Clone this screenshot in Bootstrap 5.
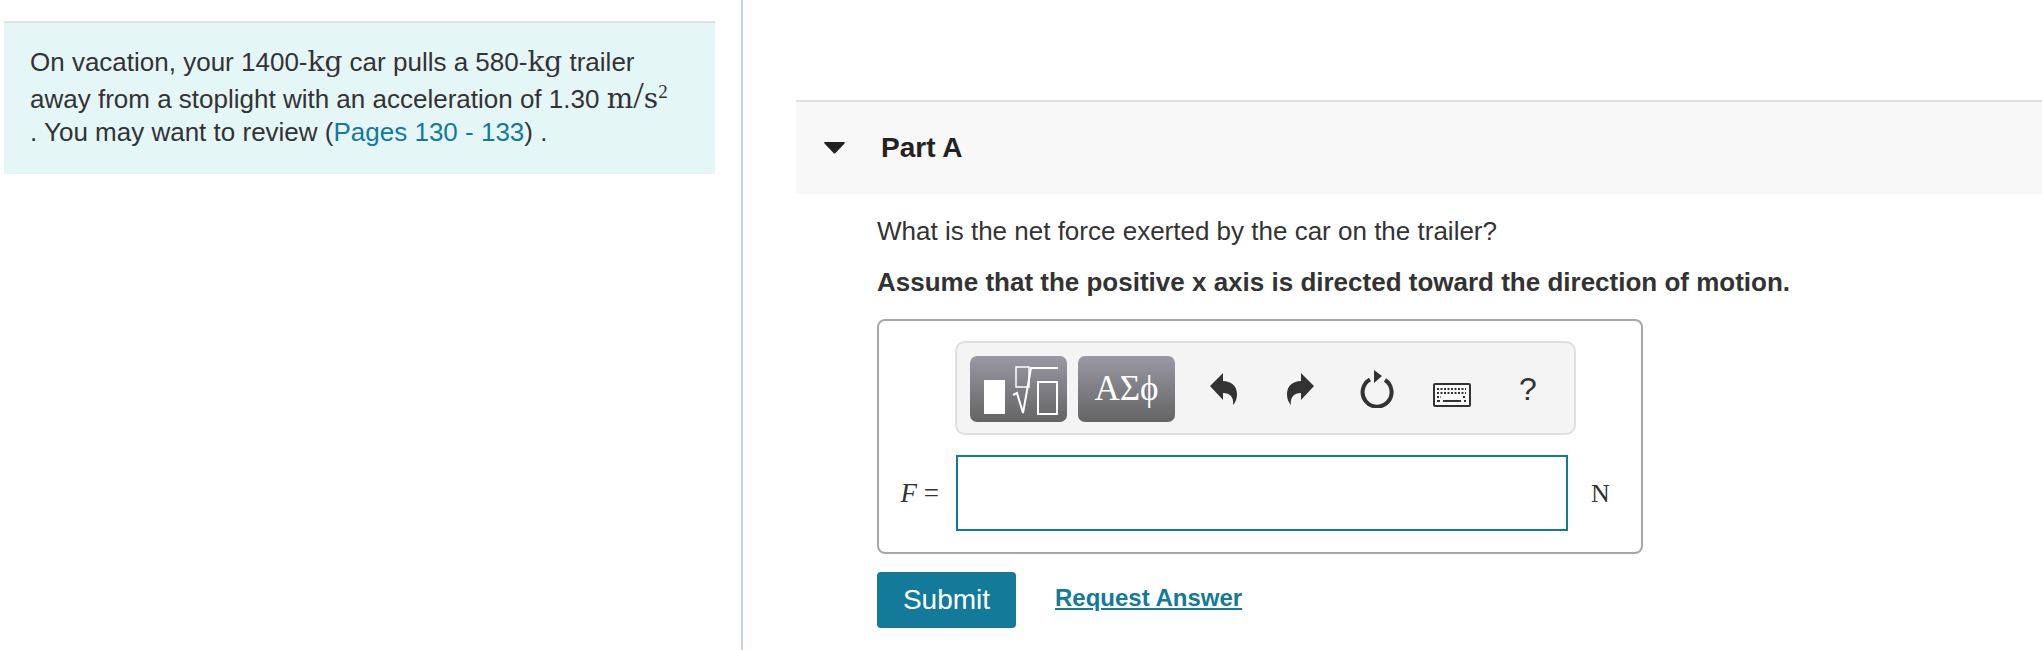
<!DOCTYPE html>
<html lang="en">
<head>
  <meta charset="UTF-8" />
  <title>Part A</title>
  <link href="https://cdn.jsdelivr.net/npm/bootstrap@5.3.0/dist/css/bootstrap.min.css" rel="stylesheet">
  <style>
    html, body { height: 650px; overflow: hidden; }
    body {
      background: #fff;
      color: #333;
      font-family: "Liberation Sans", Arial, sans-serif;
      font-size: 26px;
      line-height: 33px;
    }
    .left-pane {
      width: 743px;
      height: 650px;
      padding: 21px 26px 0 4px;
      border-right: 2px solid #c3d3e3;
      flex-shrink: 0;
    }
    .intro-box {
      background: #e5f6f7;
      border-top: 2px solid #dfe2e4;
      padding: 23px 26px 0;
      height: 153px;
    }
    .intro-box a, .link-answer { color: #137a9a; }
    .intro-box a { text-decoration: none; }
    .tex { font-family: "DejaVu Serif", "Liberation Serif", serif; font-size: 28px; line-height: 30px; }
    .tex-slash { font-family: "Liberation Serif", serif; font-size: 38px; font-weight: 400; line-height: 28px; }
    .tex sup { font-family: "Liberation Serif", serif; font-size: 19px; top: -.55em; line-height: 0; }
    .second-line { display: block; margin-top: 2px; }
    .right-pane { padding: 100px 0 0 53px; }
    .part-head {
      height: 94px;
      background: #f8f8f8;
      border-top: 2px solid #dfdfdf;
      padding-left: 28px;
      gap: 36px;
    }
    .part-head h2 { font-size: 28px; font-weight: 700; margin: 0; color: #222; line-height: 34px; }
    .part-body { padding: 20px 0 0 81px; }
    .part-body p { margin: 0 0 17px; color: #333; line-height: 34px; }
    .answer-box {
      width: 766px;
      height: 235px;
      border: 2px solid #a8a8a8;
      border-radius: 8px;
      padding: 20px 0 0 0;
      margin-top: 20px;
    }
    .tool-bar {
      width: 621px;
      height: 94px;
      margin-left: 76px;
      background: #f4f4f4;
      border: 2px solid #dfdfdf;
      border-radius: 10px;
      padding: 13px 0 0 13px;
    }
    .tmpl-btn {
      width: 97px;
      height: 66px;
      margin-right: 11px;
      padding: 0;
      border: 0;
      border-radius: 7px;
      background: linear-gradient(#9a98a3, #646464);
      color: #fff;
      font-family: "Liberation Serif", serif;
      font-size: 35px;
      line-height: 64px;
    }
    .tool-btn {
      width: 76px;
      height: 66px;
      padding: 0;
      border: 0;
      background: none;
      color: #333;
      font-size: 32px;
    }
    .tool-btn svg { display: block; margin: 0 auto; }
    .keys-icon { position: relative; top: 6px; }
    .answer-row { margin-top: 20px; }
    .var-label {
      width: 77px;
      text-align: right;
      padding-right: 17px;
      font-family: "Liberation Serif", serif;
      font-size: 27px;
    }
    .answer-input {
      width: 612px;
      height: 76px;
      border: 2px solid #137a9a;
      border-radius: 0;
    }
    .unit-label {
      font-family: "Liberation Serif", serif;
      font-size: 26px;
      padding-left: 23px;
    }
    .action-row { margin-top: 18px; gap: 39px; }
    .btn-submit {
      width: 139px;
      height: 56px;
      padding: 0;
      background: #137a9a;
      color: #fff;
      border: 0;
      border-radius: 4px;
      font-size: 28px;
    }
    .link-answer { font-weight: 700; font-size: 24px; position: relative; top: -3px; }
  </style>
</head>
<body>
  <div class="d-flex">
    <div class="left-pane">
      <div class="intro-box">
        On vacation, your 1400-<span class="tex">kg</span> car pulls a 580-<span class="tex">kg</span> trailer
        <span class="second-line">away from a stoplight with an acceleration of 1.30 <span class="tex">m<span class="tex-slash">/</span>s<sup>2</sup></span></span>
        . You may want to review (<a href="#">Pages 130 - 133</a>) .
      </div>
    </div>
    <div class="right-pane flex-grow-1">
      <div class="part-head d-flex align-items-center">
        <svg width="21" height="12" viewBox="0 0 21 12"><path d="M1 0h19c1 0 1 1 .5 1.500L11.500 11c-.6.7-1.400.7-2 0L.5 1.500C0 1 0 0 1 0z" fill="#222"/></svg>
        <h2>Part A</h2>
      </div>
      <div class="part-body">
        <p>What is the net force exerted by the car on the trailer?</p>
        <p class="fw-bold">Assume that the positive x axis is directed toward the direction of motion.</p>
        <div class="answer-box">
          <div class="tool-bar d-flex">
            <button type="button" class="btn tmpl-btn">
              <svg width="97" height="66" viewBox="0 0 97 66" class="d-block">
                <rect x="14" y="24" width="21" height="34" fill="#fff"/>
                <rect x="46" y="11" width="13" height="20" fill="none" stroke="#fff" stroke-width="1.500"/>
                <path d="M43 39l4-2 6 20 8-45h27" fill="none" stroke="#fff" stroke-width="2"/>
                <rect x="68" y="26" width="19" height="32" fill="none" stroke="#fff" stroke-width="2"/>
              </svg>
            </button>
            <button type="button" class="btn tmpl-btn">ΑΣϕ</button>
            <button type="button" class="btn tool-btn">
              <svg width="28" height="32" viewBox="0 0 28 32"><path d="M13 0v8c8 0 14 5 14 13 0 4-1 8-4 11 1-8-3-12-10-12v7L0 13z" fill="#333"/></svg>
            </button>
            <button type="button" class="btn tool-btn">
              <svg width="28" height="32" viewBox="0 0 28 32"><path d="M15 0v8C7 8 1 13 1 21c0 4 1 8 4 11-1-8 3-12 10-12v7l13-14z" fill="#333"/></svg>
            </button>
            <button type="button" class="btn tool-btn">
              <svg width="36" height="38" viewBox="0 0 36 38"><path d="M12 9.500A14.500 14.500 0 1 0 27 10" fill="none" stroke="#333" stroke-width="4"/><path d="M16 0l8 6-8 7z" fill="#333"/></svg>
            </button>
            <button type="button" class="btn tool-btn">
              <svg width="38" height="24" viewBox="0 0 38 24" class="keys-icon">
                <rect x="1" y="1" width="36" height="22" rx="1" fill="#fafafa" stroke="#333" stroke-width="2"/>
                <path d="M4 6h29M4 10h29M4 14h4M30 14h3" stroke="#333" stroke-width="2" stroke-dasharray="2 1.500" fill="none"/>
                <path d="M4 18h3M10 18h18M31 18h2" stroke="#333" stroke-width="2" fill="none"/>
              </svg>
            </button>
            <button type="button" class="btn tool-btn">?</button>
          </div>
          <div class="answer-row d-flex align-items-center">
            <div class="var-label text-nowrap"><i>F</i> =</div>
            <input type="text" class="form-control answer-input" aria-label="F">
            <div class="unit-label">N</div>
          </div>
        </div>
        <div class="action-row d-flex align-items-center">
          <button type="button" class="btn btn-submit">Submit</button>
          <a href="#" class="link-answer">Request Answer</a>
        </div>
      </div>
    </div>
  </div>
  <script src="https://cdn.jsdelivr.net/npm/bootstrap@5.3.0/dist/js/bootstrap.bundle.min.js"></script>
</body>
</html>
